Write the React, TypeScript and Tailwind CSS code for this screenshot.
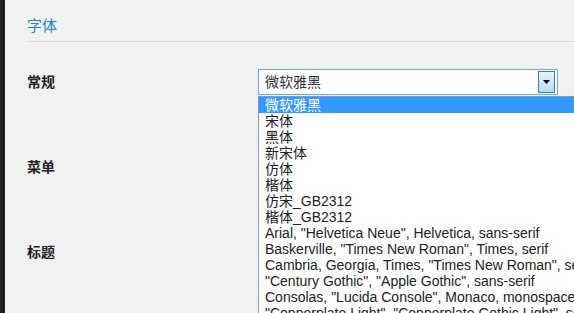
import React from "react";

const fonts = ['微软雅黑','宋体','黑体','新宋体','仿体','楷体','仿宋_GB2312','楷体_GB2312',
'Arial, "Helvetica Neue", Helvetica, sans-serif',
'Baskerville, "Times New Roman", Times, serif',
'Cambria, Georgia, Times, "Times New Roman", serif',
'"Century Gothic", "Apple Gothic", sans-serif',
'Consolas, "Lucida Console", Monaco, monospace',
'"Copperplate Light", "Copperplate Gothic Light", serif'];

function Select({ open }: { open?: boolean }) {
  return (
    <div className="relative w-[300px] h-[26px]">
      <div className={`h-full w-full bg-white border ${open ? "border-[#72a8dc]" : "border-[#a9a9a9]"} flex items-center pl-[6px] pr-[2px] text-[14px] text-[#333]`}>
        <span className="flex-1 leading-none">{open ? "微软雅黑" : ""}</span>
        <div className="w-[17px] h-[22px] border border-[#3d7bad] bg-gradient-to-b from-[#e6f4fc] to-[#b6dcf5] flex items-center justify-center">
          <svg width="7" height="4" viewBox="0 0 7 4"><path d="M0 0h7L3.5 4z" fill="#000" /></svg>
        </div>
      </div>
      {open && (
        <div className="absolute left-0 top-[27px] w-[340px] bg-white border border-[#7f9db9] z-10">
          {fonts.map((f, i) => (
            <div key={i} className={`h-[16px] leading-[16px] pl-[6px] whitespace-nowrap text-[14px] ${i === 0 ? "bg-[#3399ff] text-white" : "text-[#222]"}`}>{f}</div>
          ))}
        </div>
      )}
    </div>
  );
}

export default function App() {
  const ff = { fontFamily: '"Liberation Sans", "Noto Sans CJK SC", sans-serif' };
  return (
    <div className="w-[574px] h-[313px] overflow-hidden flex bg-[#f1f1f1]" style={ff}>
      <div className="w-[5px] h-full bg-[#1e1e1e] shrink-0" />
      <div className="flex-1 pl-[22px]">
        <div className="h-[41px] pt-[16px] text-[15px] leading-[20px] text-[#2486c4]">字体</div>
        <div className="h-px bg-[#dcdcdc]" />
        <div className="mt-[27px] flex flex-col gap-[59px]">
          {["常规", "菜单", "标题"].map((l, i) => (
            <div key={l} className="flex items-center h-[26px]">
              <div className="w-[231px] text-[14px] font-bold text-[#222]">{l}</div>
              <Select open={i === 0} />
            </div>
          ))}
        </div>
      </div>
    </div>
  );
}
